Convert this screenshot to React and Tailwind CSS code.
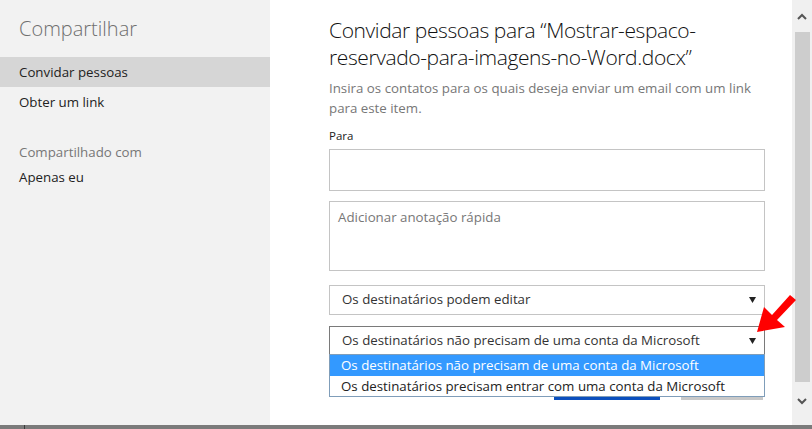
import React from 'react';

const font = { fontFamily: '"Segoe UI", "Open Sans", "Liberation Sans", sans-serif' };

const Caret = () => (
  <svg width="7" height="6" viewBox="0 0 7 6" className="shrink-0">
    <path d="M0 0h7L3.5 6z" fill="#222" />
  </svg>
);

const Sidebar = () => (
  <div className="w-[270px] shrink-0 bg-[#f2f2f2] pt-[14px]">
    <h2 className="px-[19px] text-[20px] font-light leading-[30px] text-[#6f6f6f]">Compartilhar</h2>
    <div className="mt-[13px]">
      <div className="h-[30px] bg-[#d6d6d6] px-[19px] text-[13.3px] leading-[30px] text-[#222]">Convidar pessoas</div>
      <div className="h-[30px] px-[19px] text-[13.3px] leading-[30px] text-[#222]">Obter um link</div>
    </div>
    <div className="mt-[25px] px-[19px] text-[13.3px] leading-[20px] text-[#777]">Compartilhado com</div>
    <div className="mt-[5px] px-[19px] text-[13.3px] leading-[20px] text-[#222]">Apenas eu</div>
  </div>
);

const Scrollbar = () => (
  <div className="flex w-[20px] shrink-0 flex-col items-center bg-[#f0f0f0]">
    <div className="flex h-[32px] items-center justify-center">
      <svg width="10" height="7" viewBox="0 0 10 7"><path d="M1 6l4-4 4 4" fill="none" stroke="#555" strokeWidth="2" /></svg>
    </div>
    <div className="h-[350px] w-[15px] bg-[#cdcdcd]" />
    <div className="flex flex-1 items-center justify-center pb-[4px]">
      <svg width="10" height="7" viewBox="0 0 10 7"><path d="M1 1l4 4 4-4" fill="none" stroke="#555" strokeWidth="2" /></svg>
    </div>
  </div>
);

const Main = () => (
  <div className="relative flex-1 bg-white pl-[59px] pt-[17px]">
    <div className="w-[436px]">
      <h1 className="text-[21px] font-light leading-[27px] tracking-[-0.4px] text-[#111]">
        Convidar pessoas para “Mostrar-espaco-reservado-para-imagens-no-Word.docx”
      </h1>
      <p className="mt-[7px] text-[13.3px] leading-[20px] text-[#777]">
        Insira os contatos para os quais deseja enviar um email com um link para este item.
      </p>
      <div className="mt-[10px] text-[11.5px] leading-[16px] text-[#222]">Para</div>
      <div className="mt-[5px] h-[42px] border border-[#c4c4c4] bg-white" />
      <div className="mt-[10px] h-[70px] border border-[#c4c4c4] bg-white px-[8px] pt-[5px] text-[13.3px] leading-[20px] text-[#777]">
        Adicionar anotação rápida
      </div>
      <div className="mt-[14px] flex h-[30px] items-center justify-between border border-[#c4c4c4] pl-[12px] pr-[8px] text-[13.3px] text-[#333]">
        <span>Os destinatários podem editar</span>
        <Caret />
      </div>
      <div className="relative mt-[11px]">
        <div className="flex h-[29px] items-center justify-between border border-[#7a7a7a] pl-[12px] pr-[8px] text-[13.3px] text-[#333]">
          <span>Os destinatários não precisam de uma conta da Microsoft</span>
          <Caret />
        </div>
        <div className="flex justify-end gap-[21px] pt-[16px] pr-[2px]">
          <div className="h-[29px] w-[106px] bg-[#0b4fbe]" />
          <div className="h-[29px] w-[82px] bg-[#c8c8c8]" />
        </div>
        <div className="absolute left-0 right-0 top-[28px] border border-[#7f9db9] bg-white text-[13.3px]">
          <div className="h-[21px] bg-[#3399ff] pl-[11px] leading-[21px] text-white">Os destinatários não precisam de uma conta da Microsoft</div>
          <div className="h-[20px] pl-[11px] leading-[20px] text-[#222]">Os destinatários precisam entrar com uma conta da Microsoft</div>
        </div>
      </div>
    </div>
  </div>
);

export default function App() {
  return (
    <div className="relative h-[429px] w-[812px] overflow-hidden bg-white" style={font}>
      <div className="flex h-[425px]">
        <Sidebar />
        <Main />
        <Scrollbar />
      </div>
      <div className="flex h-[4px] bg-[#7b7b7b]">
        <div className="ml-[24px] h-full w-[1px] bg-[#3c3c3c]" />
      </div>
      <svg className="absolute left-[752px] top-[290px]" width="46" height="46" viewBox="0 0 46 46">
        <polygon points="5,42 12,17 20,25 38,5 44,10 25,30 33,37" fill="#f00" />
      </svg>
    </div>
  );
}
